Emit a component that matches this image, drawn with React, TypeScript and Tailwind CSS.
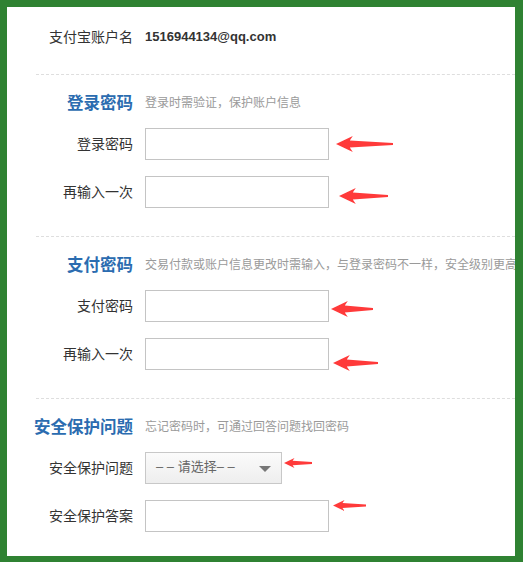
import React from "react";

function Arrow({ len, h, className }: { len: number; h: number; className?: string }) {
  const c = h / 2;
  const hw = h * 1.05;
  const t = h * 0.22;
  const d = `M0 ${c} L${hw} 0 L${hw * 0.82} ${c - t} L${len} ${c - 0.9} L${len} ${c + 0.9} L${hw * 0.82} ${c + t} L${hw} ${h} Z`;
  return (
    <svg width={len} height={h} viewBox={`0 0 ${len} ${h}`} className={className}>
      <path d={d} fill="#ff3a3a" />
    </svg>
  );
}

function Row({ label, children }: { label: string; children: React.ReactNode }) {
  return (
    <div className="flex items-center h-[32px]">
      <div className="w-[126px] shrink-0 text-right text-[14px] text-[#333] leading-none">{label}</div>
      <div className="ml-[12px] flex items-center">{children}</div>
    </div>
  );
}

function Input() {
  return <div className="w-[184px] h-[32px] border border-[#c4c4c4] bg-white shrink-0" />;
}

function Heading({ title, desc }: { title: string; desc: string }) {
  return (
    <div className="flex items-center h-[24px] mt-[16px]">
      <div className="w-[126px] shrink-0 text-right text-[16.5px] font-bold text-[#2b6cb0] leading-none">{title}</div>
      <div className="ml-[12px] text-[12px] text-[#9a9a9a] whitespace-nowrap leading-none">{desc}</div>
    </div>
  );
}

function Divider() {
  return <div className="ml-[29px] border-t border-dashed border-[#dedede]" />;
}

export default function App() {
  return (
    <div className="w-[523px] h-[562px] bg-[#2f8232] pt-[7px] pl-[7px] overflow-hidden">
      <div className="w-[508px] h-[549px] bg-white overflow-hidden font-['Liberation_Sans','Noto_Sans_CJK_SC',sans-serif]">
        <div className="pt-[14px]">
          <Row label="支付宝账户名">
            <span className="text-[13px] font-bold text-[#333]">1516944134@qq.com</span>
          </Row>
        </div>
        <div className="mt-[21px]">
          <Divider />
        </div>

        <Heading title="登录密码" desc="登录时需验证，保护账户信息" />
        <div className="mt-[13px] flex flex-col gap-[16px]">
          <Row label="登录密码">
            <Input />
            <Arrow len={57} h={16} className="ml-[7px]" />
          </Row>
          <Row label="再输入一次">
            <Input />
            <Arrow len={49} h={16} className="ml-[10px] translate-y-[4px]" />
          </Row>
        </div>
        <div className="mt-[28px]">
          <Divider />
        </div>

        <Heading title="支付密码" desc="交易付款或账户信息更改时需输入，与登录密码不一样，安全级别更高" />
        <div className="mt-[13px] flex flex-col gap-[16px]">
          <Row label="支付密码">
            <Input />
            <Arrow len={42} h={16} className="ml-[2px] translate-y-[3px]" />
          </Row>
          <Row label="再输入一次">
            <Input />
            <Arrow len={45} h={16} className="ml-[4px] translate-y-[9px]" />
          </Row>
        </div>
        <div className="mt-[28px]">
          <Divider />
        </div>

        <Heading title="安全保护问题" desc="忘记密码时，可通过回答问题找回密码" />
        <div className="mt-[13px] flex flex-col gap-[16px]">
          <Row label="安全保护问题">
            <div className="w-[137px] h-[32px] border border-[#c8c8c8] bg-gradient-to-b from-[#fbfbfb] to-[#eeeeee] flex items-center justify-between pl-[10px] pr-[10px] shrink-0">
              <span className="text-[13px] text-[#666] leading-none -translate-y-[2px] whitespace-nowrap">– – 请选择– –</span>
              <svg width="12" height="6" viewBox="0 0 12 6" className="translate-y-[1px]">
                <path d="M0 0 L12 0 L6 6 Z" fill="#777" />
              </svg>
            </div>
            <Arrow len={28} h={10} className="ml-[2px] -translate-y-[5px]" />
          </Row>
          <Row label="安全保护答案">
            <Input />
            <Arrow len={33} h={11} className="ml-[4px] -translate-y-[11px]" />
          </Row>
        </div>
      </div>
    </div>
  );
}
